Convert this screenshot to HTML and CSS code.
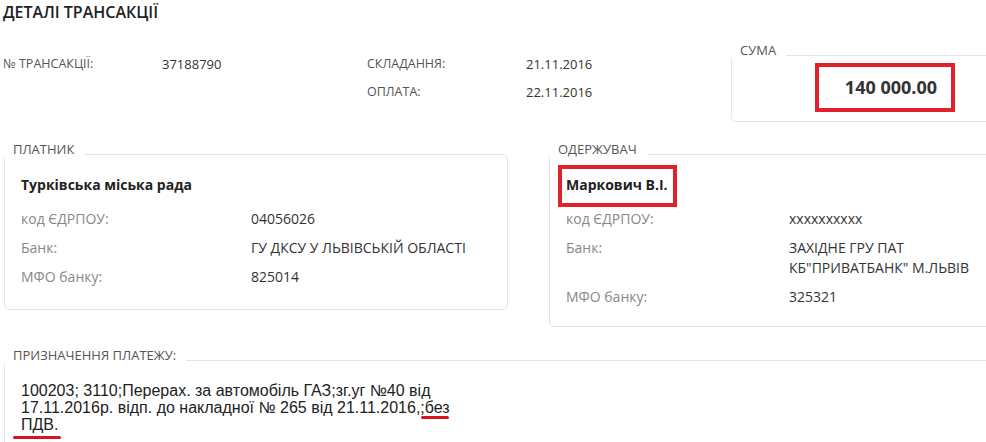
FILE: index.html
```html
<!DOCTYPE html>
<html lang="uk">
<head>
<meta charset="UTF-8">
<meta name="viewport" content="width=device-width, initial-scale=1.0">
<title>Деталі трансакції</title>
<link rel="stylesheet" href="styles.css">
</head>
<body>
<div class="page">
    <h1 class="title">ДЕТАЛІ ТРАНСАКЦІЇ</h1>

    <div class="summary">
        <div class="info">
            <span class="info-label">№ ТРАНСАКЦІЇ:</span>
            <span class="info-value">37188790</span>
            <span class="info-label">СКЛАДАННЯ:</span>
            <span class="info-value">21.11.2016</span>
            <span class="info-label col-3">ОПЛАТА:</span>
            <span class="info-value">22.11.2016</span>
        </div>
        <fieldset class="box sum-box">
            <legend>СУМА</legend>
            <div class="sum-body">
                <div class="amount">140 000.00</div>
            </div>
        </fieldset>
    </div>

    <div class="parties">
        <fieldset class="box payer">
            <legend>ПЛАТНИК</legend>
            <div class="party">
                <div class="party-name"><span>Турківська міська рада</span></div>
                <div class="row">
                    <span class="row-label">код ЄДРПОУ:</span>
                    <span class="row-value">04056026</span>
                </div>
                <div class="row">
                    <span class="row-label">Банк:</span>
                    <span class="row-value">ГУ ДКСУ У ЛЬВІВСЬКІЙ ОБЛАСТІ</span>
                </div>
                <div class="row">
                    <span class="row-label">МФО банку:</span>
                    <span class="row-value">825014</span>
                </div>
            </div>
        </fieldset>

        <fieldset class="box receiver">
            <legend>ОДЕРЖУВАЧ</legend>
            <div class="party">
                <div class="party-name"><span class="boxed">Маркович В.І.</span></div>
                <div class="row">
                    <span class="row-label">код ЄДРПОУ:</span>
                    <span class="row-value">xxxxxxxxxx</span>
                </div>
                <div class="row">
                    <span class="row-label">Банк:</span>
                    <span class="row-value">ЗАХІДНЕ ГРУ ПАТ<br>КБ"ПРИВАТБАНК" М.ЛЬВІВ</span>
                </div>
                <div class="row">
                    <span class="row-label">МФО банку:</span>
                    <span class="row-value">325321</span>
                </div>
            </div>
        </fieldset>
    </div>

    <fieldset class="box purpose">
        <legend>ПРИЗНАЧЕННЯ ПЛАТЕЖУ:</legend>
        <div class="purpose-body">
            <p class="purpose-text">100203; 3110;Перерах. за автомобіль ГАЗ;зг.уг №40 від 17.11.2016р. відп. до накладної № 265 від 21.11.2016,;<span class="mark mark-short">без</span> <span class="mark mark-long">ПДВ.</span></p>
        </div>
    </fieldset>
</div>
</body>
</html>
```

FILE: styles.css
```css
html, body {
    overflow: hidden;
}
body {
    margin: 0;
    padding: 0;
    background-color: #fff;
    font-family: "Open Sans", Arial, sans-serif;
    color: #333;
}
.page {
    width: 1020px;
    padding-left: 3px;
}
.title {
    margin: 0;
    padding-top: 1px;
    font-size: 16px;
    line-height: 22px;
    font-weight: 600;
    color: #222;
}

/* top line: numbers, dates and the sum */
.summary {
    display: flex;
    align-items: flex-start;
    margin-top: 20px;
}
.info {
    display: grid;
    grid-template-columns: 159px 205px 159px 205px;
    grid-auto-rows: 28px;
    padding-top: 7px;
    line-height: 28px;
}
.info-label {
    font-size: 12.5px;
    color: #555;
}
.info-value {
    font-size: 13px;
    color: #333;
}
.col-3 {
    grid-column: 3;
}

/* framed boxes with a caption in the top border */
.box {
    margin: 0;
    padding: 0;
    min-width: 0;
    border: 1px solid #dfe4ee;
    border-radius: 5px;
}
.box legend {
    margin-bottom: -12px;
    padding: 0 10px 10px 8px;
    font-size: 13px;
    line-height: 14px;
    color: #555;
}
.sum-box {
    width: 280px;
}
.sum-body {
    padding: 8px 0 9px 83px;
}
.amount {
    width: 140px;
    box-sizing: border-box;
    border: 4px solid #e0212b;
    padding: 8px 14px 8px 0;
    text-align: right;
    font-size: 18px;
    line-height: 25px;
    font-weight: 700;
    color: #333;
}

.parties {
    display: flex;
    align-items: flex-start;
    gap: 41px;
    margin-top: 20px;
    margin-left: 1px;
}
.payer {
    width: 504px;
    box-sizing: border-box;
}
.receiver {
    width: 460px;
    box-sizing: border-box;
}
.party {
    padding: 17px 16px 17px;
    font-size: 14px;
    line-height: 20px;
}
.receiver .party {
    padding-bottom: 14px;
}
.party-name {
    padding: 4px 0 5px;
    margin-bottom: 5px;
    font-weight: 700;
    color: #222;
}
.boxed {
    position: relative;
}
.boxed::after {
    content: "";
    position: absolute;
    left: -8px;
    top: -10px;
    width: 119px;
    height: 42px;
    box-sizing: border-box;
    border: 4px solid #e0212b;
}
.row {
    display: flex;
    padding: 4px 0 5px;
}
.row-label {
    flex: none;
    width: 230px;
    color: #888;
}
.receiver .row-label {
    width: 223px;
}
.row-value {
    color: #333;
}

.purpose {
    margin-top: 21px;
    margin-left: 1px;
}
.purpose-body {
    padding: 22px 16px 20px;
}
.purpose-text {
    width: 440px;
    margin: 0;
    font-family: "Liberation Sans", Arial, sans-serif;
    font-size: 16px;
    line-height: 17px;
    color: #222;
}
.mark {
    display: inline-block;
    position: relative;
}
.mark::after {
    content: "";
    position: absolute;
    height: 3px;
    border-radius: 2px;
    background-color: #d9131f;
}
.mark-short::after {
    left: -4px;
    right: 1px;
    bottom: -3px;
}
.mark-long::after {
    left: -8px;
    right: -3px;
    bottom: -6px;
}
```
